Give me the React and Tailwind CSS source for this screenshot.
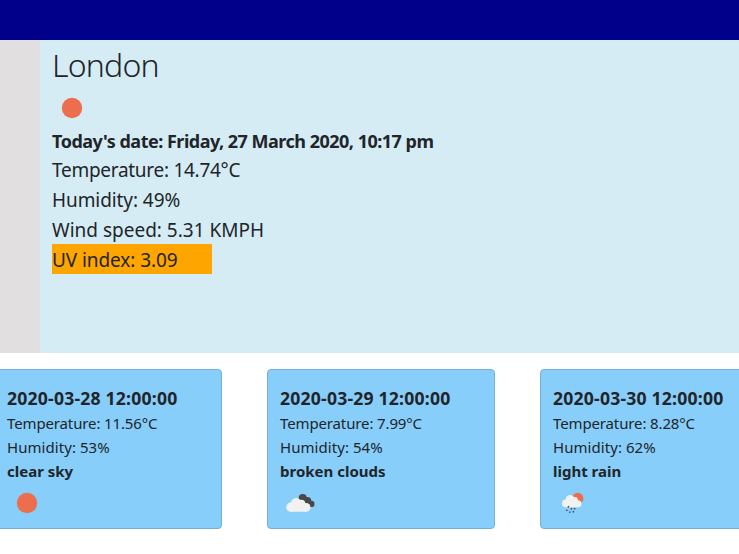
function Sun({ className }) {
  return (
    <svg className={className} width="40" height="40" viewBox="0 0 40 40">
      <circle cx="20" cy="20" r="10.2" fill="#ec6e4c" />
    </svg>
  );
}

function BrokenClouds() {
  return (
    <svg width="40" height="40" viewBox="0 0 40 40">
      <g fill="#48484a">
        <circle cx="22.7" cy="15" r="4" />
        <circle cx="27.3" cy="17.9" r="4" />
        <circle cx="31.3" cy="20.9" r="3.2" />
        <path d="M21 17h7l4 6.9h-7z" />
      </g>
      <g fill="#f2f2f2">
        <circle cx="10.8" cy="24.2" r="4.6" />
        <circle cx="16.2" cy="20.2" r="5.3" />
        <circle cx="21.5" cy="20.5" r="3.8" />
        <circle cx="26.1" cy="24.4" r="4.4" />
        <path d="M10.8 20h12l3.5 1v7.8H10.8z" />
      </g>
    </svg>
  );
}

function LightRain() {
  return (
    <svg width="40" height="40" viewBox="0 0 40 40">
      <circle cx="24.8" cy="15.4" r="5.6" fill="#ec6e4c" />
      <g fill="#f2f2f2">
        <circle cx="12.8" cy="20.4" r="3.8" />
        <circle cx="17" cy="16.3" r="4.3" />
        <circle cx="21.7" cy="17.3" r="3.2" />
        <circle cx="25" cy="20.7" r="3.5" />
        <path d="M12.8 16.5h9.5l2.7 1v6.7H12.8z" />
      </g>
      <path
        d="M15.8 23l-.8 1.5M18.8 25.2l-.7 1.4M22 25.1l-.7 1.3M14.1 26.7l-.6 1.3M17.1 28.5l-.6 1.3M20.6 28.1l-.5 1.3"
        stroke="#48484a"
        strokeWidth="1.5"
      />
    </svg>
  );
}

function ForecastCard({ title, temperature, humidity, summary, icon }) {
  return (
    <article className="h-40 w-[228px] shrink-0 rounded-[4px] border border-[#74b0d9] bg-[#87cefa] px-3 pt-4 whitespace-nowrap">
      <h2 className="h-[25px] text-[17.6px] leading-6 font-bold tracking-[0.2px]">{title}</h2>
      <p className="h-6 text-[15px] leading-6 tracking-[-0.13px]">Temperature: {temperature}</p>
      <p className="h-6 text-[15px] leading-6 tracking-[0.06px]">Humidity: {humidity}</p>
      <p className="h-6 text-[15px] leading-6 font-bold">{summary}</p>
      {icon}
    </article>
  );
}

export default function App() {
  return (
    <div className="h-[554px] w-full overflow-hidden bg-white font-['Noto_Sans','Open_Sans',sans-serif] text-[#212529]">
      <header className="h-10 bg-[#00008b]" />
      <main className="flex h-[313px]">
        <aside className="w-10 shrink-0 bg-[#e2dfe0]" />
        <section className="grow bg-[#d6ecf5] pl-3 whitespace-nowrap">
          <h1 className="h-12 text-[32px] leading-[50px] font-light tracking-[-0.8px]">London</h1>
          <Sun className="h-10 w-10" />
          <p className="h-[26px] text-[18px] leading-[26px] font-bold tracking-[-0.5px]">Today's date: Friday, 27 March 2020, 10:17 pm</p>
          <p className="h-[30px] text-[19px] leading-[32px] tracking-[-0.28px]">Temperature: 14.74°C</p>
          <p className="h-[30px] text-[19px] leading-[32px] tracking-[-0.08px]">Humidity: 49%</p>
          <p className="h-[30px] text-[19px] leading-[32px]">Wind speed: 5.31 KMPH</p>
          <p className="h-[30px] w-40 bg-[#ffa500] text-[19px] leading-[32px] tracking-[-0.08px]">UV index: 3.09</p>
        </section>
      </main>
      <div className="-ml-1.5 flex gap-[45px] pt-4">
        <ForecastCard title="2020-03-28 12:00:00" temperature="11.56°C" humidity="53%" summary="clear sky" icon={<Sun />} />
        <ForecastCard title="2020-03-29 12:00:00" temperature="7.99°C" humidity="54%" summary="broken clouds" icon={<BrokenClouds />} />
        <ForecastCard title="2020-03-30 12:00:00" temperature="8.28°C" humidity="62%" summary="light rain" icon={<LightRain />} />
      </div>
    </div>
  );
}
